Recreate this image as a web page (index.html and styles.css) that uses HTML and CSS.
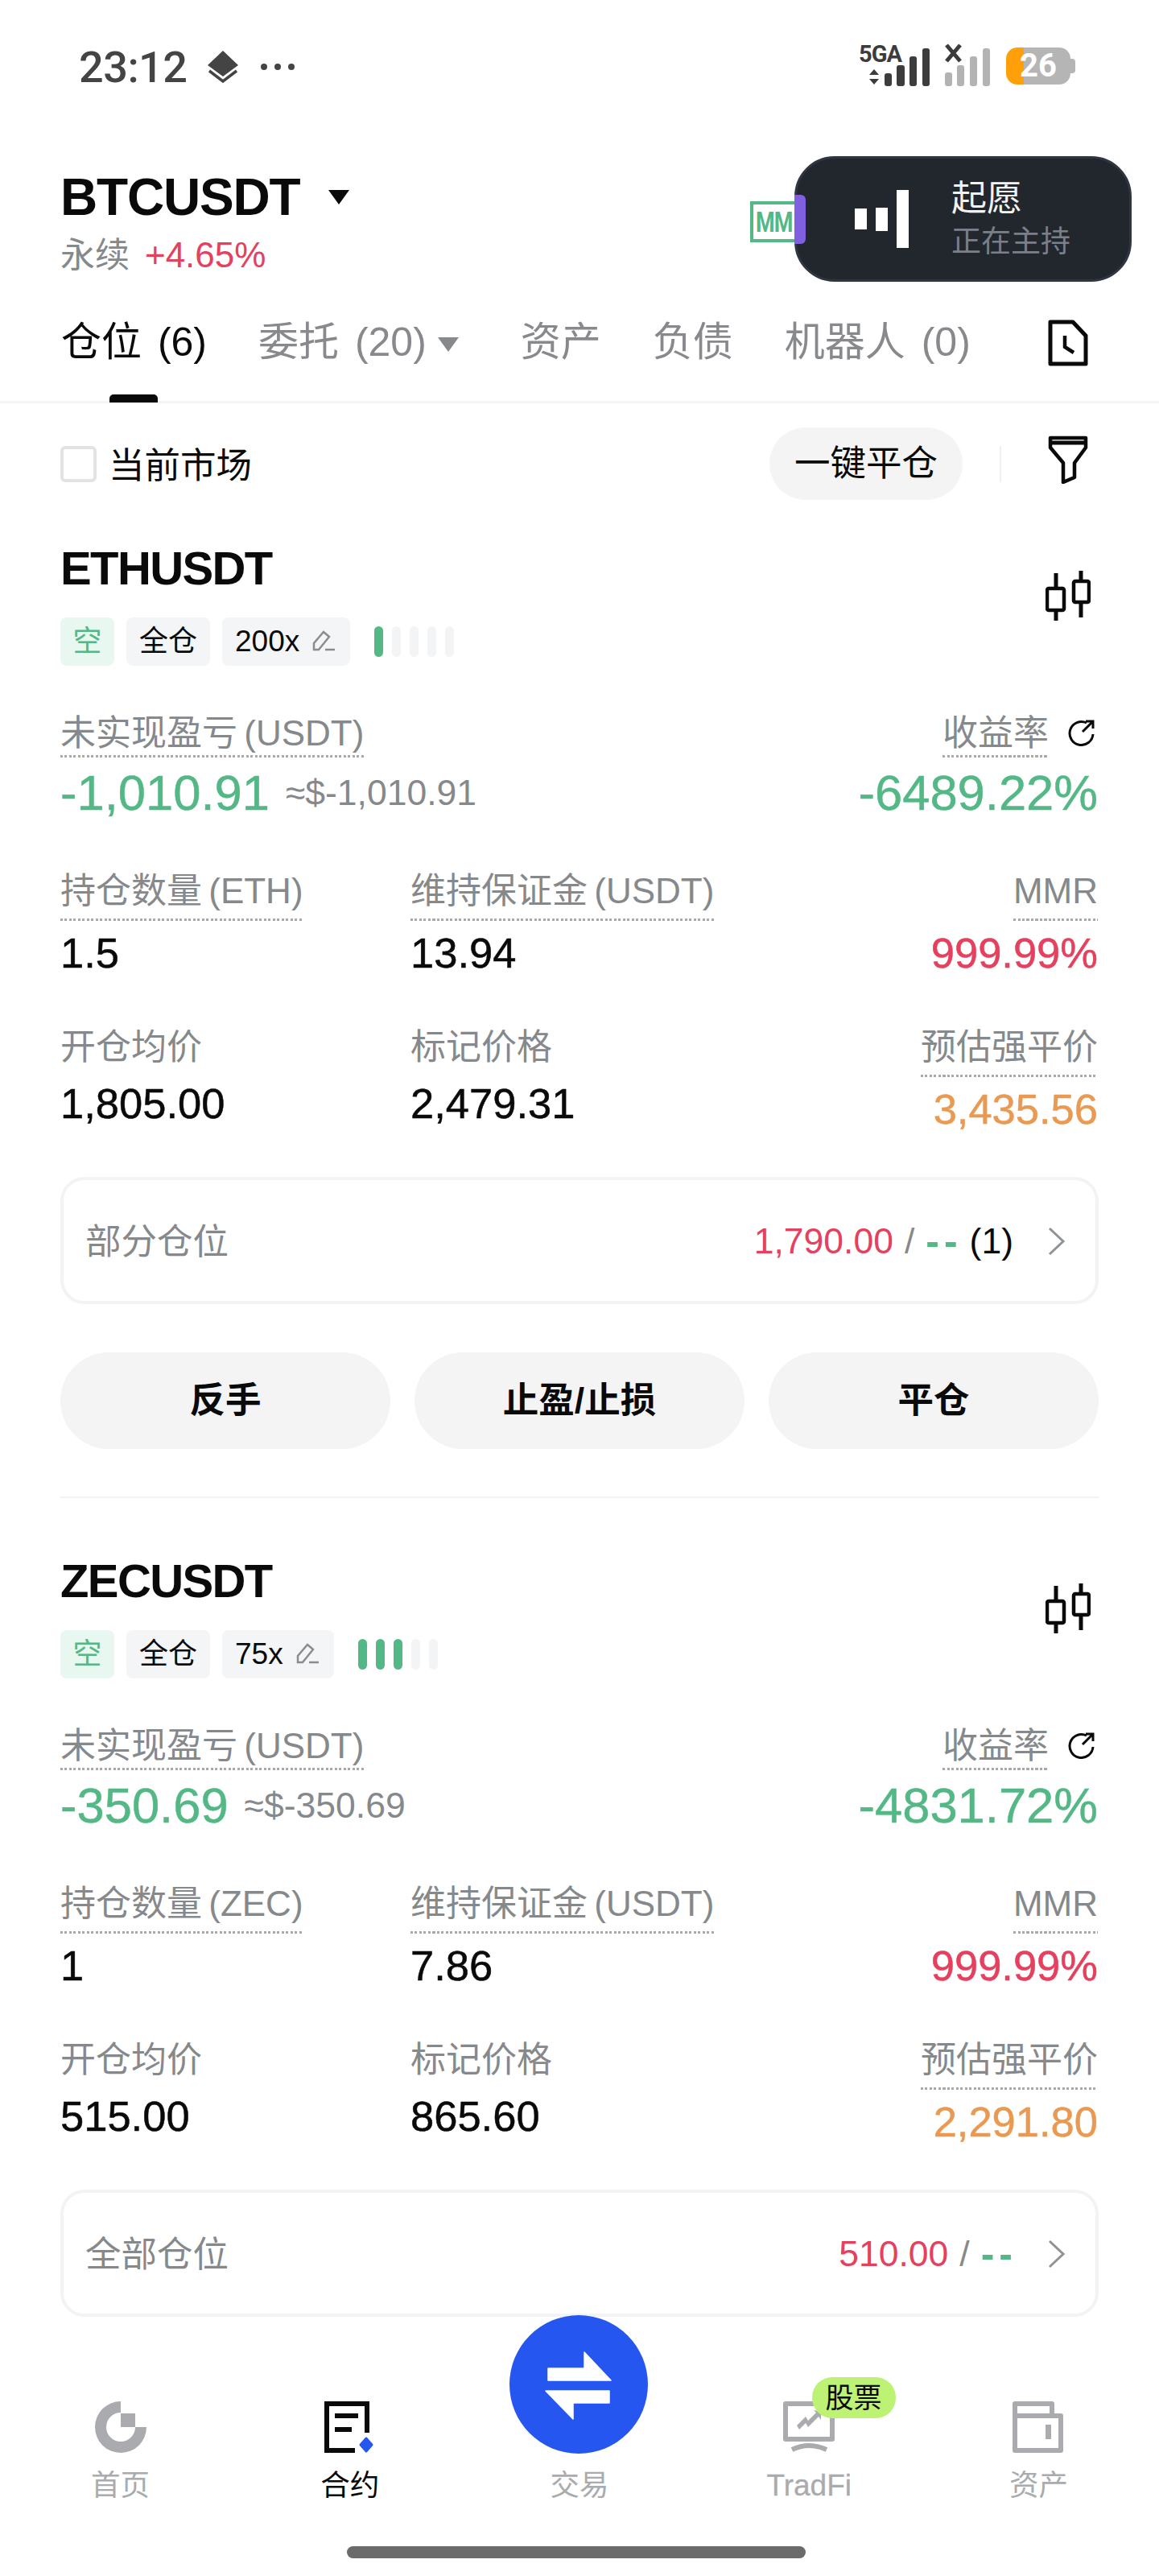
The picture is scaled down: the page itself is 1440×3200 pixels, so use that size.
FILE: index.html
```html
<!DOCTYPE html>
<html lang="zh-CN">
<head>
    <meta charset="UTF-8">
    <title>合约仓位</title>
    <link rel="stylesheet" href="styles.css">
</head>
<body>
<div class="page">
    <!-- status bar -->
    <div class="status">
        <span class="time">23:12</span>
        <svg class="stack" width="38" height="40" viewBox="0 0 38 40">
            <path d="M19 0L38 18L19 32L0 18Z" fill="#444"/>
            <path d="M2 25L19 38L36 25" fill="none" stroke="#444" stroke-width="3.5"/>
        </svg>
        <svg class="dots" width="42" height="14" viewBox="0 0 42 14">
            <circle cx="4" cy="7" r="4" fill="#444"/><circle cx="21" cy="7" r="4" fill="#444"/><circle cx="38" cy="7" r="4" fill="#444"/>
        </svg>
        <svg class="signal" width="170" height="58" viewBox="0 0 170 58">
            <text x="0" y="24" class="sig-text">5GA</text>
            <path d="M19 33l6 7h-12zM19 52l6-7h-12z" fill="#3c3c3c"/>
            <rect x="32" y="38" width="9" height="16" rx="3" fill="#3c3c3c"/>
            <rect x="47" y="28" width="10" height="26" rx="3" fill="#3c3c3c"/>
            <rect x="63" y="17" width="9" height="37" rx="3" fill="#3c3c3c"/>
            <rect x="79" y="7" width="9" height="47" rx="3" fill="#3c3c3c"/>
            <path d="M109 3l17 20M126 3l-17 20" stroke="#3c3c3c" stroke-width="5"/>
            <rect x="107" y="37" width="9" height="17" rx="3" fill="#b3b3b3"/>
            <rect x="122" y="28" width="9" height="26" rx="3" fill="#b3b3b3"/>
            <rect x="138" y="17" width="9" height="37" rx="3" fill="#b3b3b3"/>
            <rect x="154" y="7" width="9" height="47" rx="3" fill="#b3b3b3"/>
        </svg>
        <span class="battery">26</span>
    </div>

    <!-- title -->
    <div class="header">
        <div class="title-row">
            <span class="title">BTCUSDT</span>
            <svg width="26" height="18" viewBox="0 0 26 18"><path d="M0 0H26L13 18Z" fill="#0a0a0a"/></svg>
        </div>
        <div class="sub"><span class="grey">永续</span> <span class="red change">+4.65%</span></div>
        <div class="mm"><span>MM</span></div>
        <div class="island">
            <i class="island-tab"></i>
            <div class="island-bars"><i class="b1"></i><i class="b2"></i><i class="b3"></i></div>
            <div class="island-text">
                <div class="island-name">起愿</div>
                <div class="island-state">正在主持</div>
            </div>
        </div>
    </div>

    <!-- tabs -->
    <div class="tabs">
        <span class="tab active">仓位 (6)</span>
        <span class="tab">委托 (20)<svg class="tab-arrow" width="26" height="18" viewBox="0 0 26 18"><path d="M0 0H26L13 18Z" fill="#87898c"/></svg></span>
        <span class="tab">资产</span>
        <span class="tab">负债</span>
        <span class="tab">机器人 (0)</span>
        <svg class="doc" width="50" height="58" viewBox="0 0 50 58">
            <path d="M3 3H31L47 20V55H3Z" fill="none" stroke="#0a0a0a" stroke-width="5" stroke-linejoin="round"/>
            <path d="M21 20V34L32 41" fill="none" stroke="#0a0a0a" stroke-width="4.5"/>
        </svg>
    </div>

    <!-- filter -->
    <div class="filter">
        <span class="check"></span>
        <span class="filter-label">当前市场</span>
        <span class="close-all">一键平仓</span>
        <i class="filter-line"></i>
        <svg class="funnel" width="50" height="60" viewBox="0 0 50 60">
            <path d="M3 3H47V15L33 34V52L19 58V34L3 15Z" fill="none" stroke="#0a0a0a" stroke-width="4.5" stroke-linejoin="round"/>
            <path d="M3 9H47" stroke="#0a0a0a" stroke-width="5"/>
        </svg>
    </div>

    <div class="list">
        <!-- ETH -->
        <div class="position">
            <div class="pos-head">
                <span class="pos-name">ETHUSDT</span>
                <svg class="candle" width="56" height="62" viewBox="0 0 56 62">
                    <path d="M13 3V22M13 49V62M44 0V13M44 39V58" stroke="#0a0a0a" stroke-width="5"/>
                    <rect x="2" y="22" width="21" height="27" rx="2" fill="none" stroke="#0a0a0a" stroke-width="4.5"/>
                    <rect x="35" y="13" width="19" height="26" rx="2" fill="none" stroke="#0a0a0a" stroke-width="4.5"/>
                </svg>
            </div>
            <div class="tags">
                <span class="tag short">空</span>
                <span class="tag">全仓</span>
                <span class="tag lev">200x
                    <svg class="pen" width="30" height="28" viewBox="0 0 30 28"><path d="M3 25V17L15 3L22 9L9 25ZM17 25H29" fill="none" stroke="#8a8d90" stroke-width="2.5"/></svg>
                </span>
                <div class="risk"><i class="on"></i><i></i><i></i><i></i><i></i></div>
            </div>
            <div class="pnl">
                <div>
                    <div class="label dot pnl-label">未实现盈亏 (USDT)</div>
                    <div class="pnl-val"><span class="big green">-1,010.91</span><span class="approx">≈$-1,010.91</span></div>
                </div>
                <div class="right">
                    <div class="roe-row">
                        <span class="label dot pnl-label">收益率</span>
                        <svg class="share" width="34" height="34" viewBox="0 0 34 34"><path d="M23 5A14.500 14.500 0 1 0 31 19" fill="none" stroke="#0a0a0a" stroke-width="3"/><path d="M18 16L31 3M22 3H31V12" fill="none" stroke="#0a0a0a" stroke-width="3"/></svg>
                    </div>
                    <div class="big green">-6489.22%</div>
                </div>
            </div>
            <div class="stats">
                <div class="stat"><span class="label dot">持仓数量 (ETH)</span><div class="val">1.5</div></div>
                <div class="stat"><span class="label dot">维持保证金 (USDT)</span><div class="val">13.94</div></div>
                <div class="stat right"><span class="label dot">MMR</span><div class="val red">999.99%</div></div>
                <div class="stat"><span class="label plain">开仓均价</span><div class="val">1,805.00</div></div>
                <div class="stat"><span class="label plain">标记价格</span><div class="val">2,479.31</div></div>
                <div class="stat right"><span class="label dot">预估强平价</span><div class="val orange">3,435.56</div></div>
            </div>
            <div class="tpsl">
                <span class="grey tpsl-name">部分仓位</span>
                <span class="tpsl-val"><span class="red">1,790.00</span> <span class="grey">/</span> <span class="green dash">--</span> <span class="count">(1)</span>
                    <svg class="chev" width="24" height="36" viewBox="0 0 24 36"><path d="M3 2L20 18L3 34" fill="none" stroke="#909396" stroke-width="3"/></svg>
                </span>
            </div>
            <div class="actions">
                <span class="btn">反手</span>
                <span class="btn">止盈/止损</span>
                <span class="btn">平仓</span>
            </div>
        </div>

        <!-- ZEC -->
        <div class="position">
            <div class="pos-head">
                <span class="pos-name">ZECUSDT</span>
                <svg class="candle" width="56" height="62" viewBox="0 0 56 62">
                    <path d="M13 3V22M13 49V62M44 0V13M44 39V58" stroke="#0a0a0a" stroke-width="5"/>
                    <rect x="2" y="22" width="21" height="27" rx="2" fill="none" stroke="#0a0a0a" stroke-width="4.5"/>
                    <rect x="35" y="13" width="19" height="26" rx="2" fill="none" stroke="#0a0a0a" stroke-width="4.5"/>
                </svg>
            </div>
            <div class="tags">
                <span class="tag short">空</span>
                <span class="tag">全仓</span>
                <span class="tag lev">75x
                    <svg class="pen" width="30" height="28" viewBox="0 0 30 28"><path d="M3 25V17L15 3L22 9L9 25ZM17 25H29" fill="none" stroke="#8a8d90" stroke-width="2.5"/></svg>
                </span>
                <div class="risk"><i class="on"></i><i class="on"></i><i class="on"></i><i></i><i></i></div>
            </div>
            <div class="pnl">
                <div>
                    <div class="label dot pnl-label">未实现盈亏 (USDT)</div>
                    <div class="pnl-val"><span class="big green">-350.69</span><span class="approx">≈$-350.69</span></div>
                </div>
                <div class="right">
                    <div class="roe-row">
                        <span class="label dot pnl-label">收益率</span>
                        <svg class="share" width="34" height="34" viewBox="0 0 34 34"><path d="M23 5A14.500 14.500 0 1 0 31 19" fill="none" stroke="#0a0a0a" stroke-width="3"/><path d="M18 16L31 3M22 3H31V12" fill="none" stroke="#0a0a0a" stroke-width="3"/></svg>
                    </div>
                    <div class="big green">-4831.72%</div>
                </div>
            </div>
            <div class="stats">
                <div class="stat"><span class="label dot">持仓数量 (ZEC)</span><div class="val">1</div></div>
                <div class="stat"><span class="label dot">维持保证金 (USDT)</span><div class="val">7.86</div></div>
                <div class="stat right"><span class="label dot">MMR</span><div class="val red">999.99%</div></div>
                <div class="stat"><span class="label plain">开仓均价</span><div class="val">515.00</div></div>
                <div class="stat"><span class="label plain">标记价格</span><div class="val">865.60</div></div>
                <div class="stat right"><span class="label dot">预估强平价</span><div class="val orange">2,291.80</div></div>
            </div>
            <div class="tpsl">
                <span class="grey tpsl-name">全部仓位</span>
                <span class="tpsl-val"><span class="red">510.00</span> <span class="grey">/</span> <span class="green dash">--</span>
                    <svg class="chev" width="24" height="36" viewBox="0 0 24 36"><path d="M3 2L20 18L3 34" fill="none" stroke="#909396" stroke-width="3"/></svg>
                </span>
            </div>
        </div>
    </div>

    <!-- bottom nav -->
    <div class="nav">
        <div class="nav-items">
            <div class="nav-item">
                <svg width="64" height="64" viewBox="0 0 64 64">
                    <path d="M32 0V14A18 18 0 1 0 50 32H64A32 32 0 1 1 32 0Z" fill="#a9abae"/>
                    <rect x="32" y="15" width="18" height="17" fill="#a9abae"/>
                </svg>
                <span>首页</span>
            </div>
            <div class="nav-item current">
                <svg width="64" height="64" viewBox="0 0 64 64">
                    <path d="M38 61H3V3H53V39" fill="none" stroke="#0a0a0a" stroke-width="6"/>
                    <rect x="13" y="15" width="29" height="6" fill="#0a0a0a"/>
                    <rect x="13" y="32" width="21" height="6" fill="#0a0a0a"/>
                    <path d="M52 46L59 54L52 62L45 54Z" fill="#2557f0" stroke="#2557f0" stroke-width="3" stroke-linejoin="round"/>
                </svg>
                <span>合约</span>
            </div>
            <div class="nav-item trade">
                <div class="swap">
                    <svg width="172" height="172" viewBox="0 0 172 172">
                        <path d="M48 66H93V46L126 81H48Z" fill="#fff" stroke="#fff" stroke-width="1.500" stroke-linejoin="round"/>
                        <path d="M45 94H124V109H79V129Z" fill="#fff" stroke="#fff" stroke-width="1.500" stroke-linejoin="round"/>
                    </svg>
                </div>
                <span>交易</span>
            </div>
            <div class="nav-item">
                <svg width="64" height="64" viewBox="0 0 64 64">
                    <path d="M3 3H61V47H3Z" fill="none" stroke="#a9abae" stroke-width="6" stroke-linejoin="round"/>
                    <path d="M11 60Q32 50 54 60" fill="none" stroke="#a9abae" stroke-width="6"/>
                    <path d="M17 30L28 19L31 24L41 14L38 11L47 13V23L44 19L31 32L28 27L20 35Z" fill="#a9abae"/>
                </svg>
                <span class="en">TradFi</span>
                <em class="badge">股票</em>
            </div>
            <div class="nav-item">
                <svg width="64" height="64" viewBox="0 0 64 64">
                    <path d="M3 61V3H49V18H60V61ZM3 18H49" fill="none" stroke="#a9abae" stroke-width="6" stroke-linejoin="round"/>
                    <rect x="41" y="29" width="7" height="18" fill="#a9abae"/>
                </svg>
                <span>资产</span>
            </div>
        </div>
        <div class="home-bar"></div>
    </div>
</div>
</body>
</html>
```
FILE: styles.css
```css
* {
    padding: 0;
    margin: 0;
    box-sizing: border-box;
}

body {
    background: #fff;
    color: #0a0a0a;
    font-family: "Liberation Sans", "Noto Sans CJK SC", sans-serif;
}

i, em {
    font-style: normal;
}

.page {
    width: 1440px;
    height: 3200px;
    display: flex;
    flex-direction: column;
    overflow: hidden;
}

.grey { color: #86898c; }
.red { color: #e5405e; }
.green { color: #53b885; }
.orange { color: #e99a52; }

/* status bar */
.status {
    height: 166px;
    display: flex;
    align-items: center;
    padding-left: 98px;
    flex: none;
}

.time {
    font-family: Roboto, sans-serif;
    font-weight: 500;
    font-size: 54px;
    color: #444;
    letter-spacing: -0.5px;
}

.stack {
    margin-left: 25px;
}

.dots {
    margin-left: 28px;
}

.signal {
    margin-left: auto;
    margin-top: -2px;
    overflow: visible;
}

.sig-text {
    font-family: Roboto, sans-serif;
    font-weight: 700;
    font-size: 29px;
    letter-spacing: -1px;
    fill: #3c3c3c;
}

.battery {
    position: relative;
    width: 80px;
    height: 46px;
    margin-left: 13px;
    margin-right: 110px;
    margin-top: -2px;
    border-radius: 14px;
    background: linear-gradient(90deg, #ff9f0a 0 22px, #b5b5b5 22px);
    color: #fff;
    font-family: Roboto, sans-serif;
    font-weight: 700;
    font-size: 40px;
    line-height: 46px;
    text-align: center;
}

.battery::after {
    content: "";
    position: absolute;
    right: -6px;
    top: 14px;
    width: 6px;
    height: 18px;
    border-radius: 0 4px 4px 0;
    background: #b5b5b5;
}

/* title */
.header {
    height: 190px;
    padding: 45px 0 0 75px;
    flex: none;
    position: relative;
}

.title-row {
    display: flex;
    align-items: center;
    height: 68px;
    gap: 36px;
}

.title {
    font-size: 64px;
    font-weight: 700;
    letter-spacing: -1.2px;
}

.sub {
    margin-top: 13px;
    font-size: 43px;
    line-height: 50px;
}

.change {
    margin-left: 7px;
    font-size: 44px;
}

.mm {
    position: absolute;
    left: 932px;
    top: 84px;
    width: 60px;
    height: 51px;
    border: 4px solid #53b885;
    color: #53b885;
    font-family: Roboto, sans-serif;
    font-weight: 700;
    font-size: 27px;
    line-height: 44px;
    padding-left: 3px;
    white-space: nowrap;
}

.mm span {
    display: inline-block;
    transform: scaleY(1.3);
    letter-spacing: -1px;
}

.island {
    position: absolute;
    left: 987px;
    top: 28px;
    width: 419px;
    height: 156px;
    border: 3px solid #2f3541;
    border-radius: 50px;
    background: #22272e;
    display: flex;
    align-items: center;
    padding-left: 72px;
}

.island-tab {
    position: absolute;
    left: -3px;
    top: 45px;
    width: 14px;
    height: 61px;
    border-radius: 0 6px 6px 0;
    background: #8060e0;
}

.island-bars {
    display: flex;
    align-items: center;
    gap: 11px;
}

.island-bars i {
    display: block;
    width: 15px;
    background: #fff;
}

.island-bars .b1 { height: 26px; }
.island-bars .b2 { height: 29px; width: 15px; }
.island-bars .b3 { height: 72px; }

.island-text {
    margin-left: 53px;
}

.island-name {
    color: #f2f2f2;
    font-size: 44px;
    line-height: 56px;
    padding-top: 2px;
}

.island-state {
    color: #7a7f89;
    font-size: 37px;
    line-height: 52px;
}

/* tabs */
.tabs {
    height: 145px;
    flex: none;
    display: flex;
    gap: 64px;
    padding: 39px 88px 0 76px;
    border-bottom: 3px solid #f3f4f5;
    font-size: 50px;
    line-height: 60px;
    color: #87898c;
}

.tab {
    position: relative;
    white-space: nowrap;
    word-spacing: 6px;
}

.tab.active {
    color: #0a0a0a;
}

.tab.active::after {
    content: "";
    position: absolute;
    left: 60px;
    top: 95px;
    width: 60px;
    height: 10px;
    border-radius: 5px 5px 0 0;
    background: #0a0a0a;
}

.tab-arrow {
    margin-left: 14px;
    margin-right: 13px;
    vertical-align: 5px;
}

.doc {
    margin-left: auto;
    margin-top: 2px;
}

/* filter */
.filter {
    flex: none;
    display: flex;
    align-items: center;
    padding: 30px 88px 49px 75px;
}

.check {
    width: 45px;
    height: 45px;
    border: 4px solid #e3e3e3;
    border-radius: 6px;
}

.filter-label {
    margin-left: 15px;
    margin-top: -3px;
    font-size: 44.500px;
}

.close-all {
    margin-left: auto;
    width: 240px;
    height: 90px;
    border-radius: 45px;
    background: #f4f4f4;
    font-size: 44.500px;
    line-height: 90px;
    text-align: center;
}

.filter-line {
    width: 2px;
    height: 45px;
    margin-left: 46px;
    background: #f0f0f0;
}

.funnel {
    margin-left: 58px;
    margin-top: -10px;
}

/* position list */
.list {
    flex: 1;
    overflow: hidden;
    padding: 0 75px;
}

.position + .position {
    margin-top: 59px;
    padding-top: 67px;
    border-top: 2px solid #f3f4f5;
}

.pos-head {
    display: flex;
    justify-content: space-between;
    height: 72px;
}

.pos-name {
    font-size: 58px;
    font-weight: 700;
    line-height: 72px;
    letter-spacing: -1.600px;
}

.candle {
    margin-top: 39px;
    margin-right: 10px;
}

.tags {
    display: flex;
    align-items: center;
    gap: 15px;
    margin-top: 25px;
    height: 60px;
}

.tag {
    height: 60px;
    padding: 0 16px;
    border-radius: 8px;
    background: #f4f5f6;
    font-size: 36px;
    line-height: 60px;
    display: flex;
    align-items: center;
    gap: 15px;
}

.tag.short {
    padding: 0 15.500px;
    background: #e9f7f1;
    color: #53b885;
}

.tag.lev {
    padding-right: 18px;
    font-size: 37px;
}

.pen {
    margin-top: -3px;
}

.risk {
    display: flex;
    gap: 11px;
    margin-left: 15px;
}

.risk i {
    width: 11px;
    height: 38px;
    border-radius: 6px;
    background: #f3f4f5;
}

.risk i.on {
    background: #53b885;
}

.pnl {
    display: flex;
    justify-content: space-between;
    margin-top: 56px;
}

.label {
    display: inline-block;
    padding-top: 3px;
    font-size: 44px;
    line-height: 50px;
    color: #86898c;
    white-space: nowrap;
    word-spacing: -4px;
}

.dot {
    padding-bottom: 12px;
    background: repeating-linear-gradient(90deg, #a9a9a9 0 3px, transparent 3px 5.5px) left bottom / 100% 3px no-repeat;
}

.plain {
    padding-bottom: 5px;
}

.pnl-label {
    padding-bottom: 5px;
}

.pnl-val {
    display: flex;
    align-items: center;
    margin-top: 11px;
}

.big {
    font-size: 61.500px;
    line-height: 66px;
    -webkit-text-stroke: 0.5px;
}

.approx {
    margin-left: 20px;
    font-size: 44.500px;
    color: #86898c;
}

.pnl .right {
    text-align: right;
    padding-right: 1px;
}

.pnl .right .big {
    margin-top: 11px;
}

.roe-row {
    display: flex;
    justify-content: flex-end;
    gap: 24px;
    align-items: flex-start;
    transform: translateX(-1px);
}

.share {
    margin-top: 10px;
    margin-right: 2px;
}

.stats {
    display: grid;
    grid-template-columns: 435px 1fr auto;
    row-gap: 59px;
    margin-top: 61px;
    padding-right: 1px;
}

.stat.right {
    text-align: right;
}

.val {
    margin-top: 10px;
    font-size: 52.500px;
    line-height: 60px;
    -webkit-text-stroke: 0.5px;
}

.tpsl {
    height: 158px;
    margin-top: 54px;
    padding: 0 36px 0 27px;
    border: 4px solid #f1f3f4;
    border-radius: 30px;
    display: flex;
    align-items: center;
    justify-content: space-between;
    font-size: 44.500px;
}

.tpsl-name {
    margin-top: -5px;
}

.tpsl-val {
    display: flex;
    align-items: center;
    gap: 14px;
    margin-top: 1px;
}

.dash {
    font-size: 50px;
    font-weight: 700;
    letter-spacing: 6px;
    margin-right: -5px;
}

.chev {
    margin-left: 28px;
}

.actions {
    display: flex;
    gap: 30px;
    margin-top: 60px;
}

.btn {
    flex: 1;
    height: 120px;
    border-radius: 60px;
    background: #f4f4f4;
    font-size: 44.500px;
    font-weight: 700;
    line-height: 120px;
    text-align: center;
}

/* bottom nav */
.nav {
    height: 320px;
    flex: none;
    background: #fff;
}

.nav-items {
    display: grid;
    grid-template-columns: repeat(5, 1fr);
    padding: 0 7px;
    height: 232px;
}

.nav-item {
    position: relative;
    display: flex;
    flex-direction: column;
    align-items: center;
    padding-top: 103px;
    font-size: 36.500px;
    line-height: 50px;
    color: #a9abae;
}

.nav-item svg {
    overflow: visible;
}

.nav-item span {
    margin-top: 16px;
}

.nav-item .en {
    font-size: 37px;
    -webkit-text-stroke: 0.3px;
}

.nav-item.current {
    color: #0a0a0a;
}

.nav-item.trade {
    padding-top: 0;
}

.swap {
    width: 172px;
    height: 172px;
    margin-top: -4px;
    margin-left: -2px;
    border-radius: 50%;
    background: #2557f0;
}

.nav-item.trade span {
    margin-top: 15px;
}

.badge {
    position: absolute;
    left: 146px;
    top: 73px;
    width: 104px;
    height: 51px;
    border-radius: 25px;
    background: #bdf274;
    color: #0a0a0a;
    font-size: 35px;
    line-height: 51px;
    text-align: center;
}

.home-bar {
    width: 570px;
    height: 15px;
    margin: 51px 0 0 431px;
    border-radius: 8px;
    background: #6b6b6b;
}
```
